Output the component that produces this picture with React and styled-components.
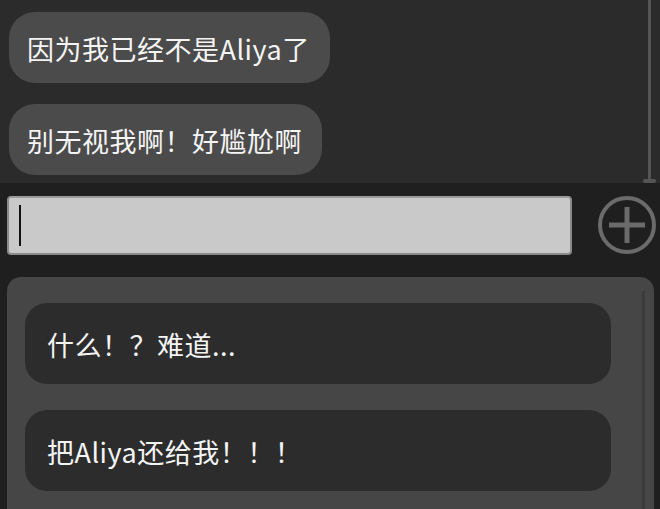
import React from 'react';
import styled, { createGlobalStyle } from 'styled-components';

const GlobalStyle = createGlobalStyle`
  html, body {
    margin: 0;
    padding: 0;
    background: #1f1f1f;
  }
  body {
    font-family: "Noto Sans CJK SC", "Noto Sans", sans-serif;
    color: #f4f4f4;
  }
`;

const Page = styled.div`
  width: 660px;
  height: 509px;
  overflow: hidden;
  display: flex;
  flex-direction: column;
  background: #1f1f1f;
`;

const ChatArea = styled.div`
  position: relative;
  height: 183px;
  flex-shrink: 0;
  background: #2b2b2b;
  padding: 12px 0 0 9px;
  box-sizing: border-box;
  display: flex;
  flex-direction: column;
  align-items: flex-start;
  gap: 21px;
`;

const Bubble = styled.div`
  height: 71px;
  box-sizing: border-box;
  padding: 1px 20px 0 18px;
  display: flex;
  align-items: center;
  background: #4b4b4b;
  border-radius: 26px;
  font-size: 27px;
  letter-spacing: 0.5px;
  line-height: 1;
  white-space: nowrap;
`;

const ScrollTrack = styled.div`
  position: absolute;
  top: 0;
  right: 9px;
  width: 3px;
  height: 180px;
  background: #555;

  &::after {
    content: '';
    position: absolute;
    left: -5px;
    bottom: -3px;
    width: 13px;
    height: 4px;
    border-radius: 2px;
    background: #555;
  }
`;

const InputBar = styled.div`
  height: 94px;
  flex-shrink: 0;
  box-sizing: border-box;
  padding: 13px 0 0 7px;
  display: flex;
  align-items: flex-start;
  gap: 26px;
`;

const TextField = styled.div`
  width: 565px;
  height: 59px;
  box-sizing: border-box;
  background: #c9c9c9;
  border: 2px solid #8a8a8a;
  border-top-color: #9a9a9a;
  border-radius: 4px;
  padding: 7px 0 0 10px;
`;

const Caret = styled.div`
  width: 2px;
  height: 41px;
  background: #111;
`;

const AddButton = styled.button`
  width: 58px;
  height: 58px;
  padding: 0;
  border: none;
  background: transparent;
  display: flex;
  cursor: pointer;
`;

const Panel = styled.div`
  position: relative;
  flex: 1;
  margin: 0 6px 0 7px;
  background: #464646;
  border-radius: 14px 14px 0 0;
  padding: 26px 0 0 18px;
  display: flex;
  flex-direction: column;
  gap: 26px;
`;

const PanelTrack = styled.div`
  position: absolute;
  top: 14px;
  bottom: 0;
  right: 9px;
  width: 3px;
  background: #3b3b3b;
`;

const Option = styled.div`
  width: 586px;
  height: 81px;
  box-sizing: border-box;
  padding: 1px 0 0 22px;
  display: flex;
  align-items: center;
  background: #2c2c2c;
  border-radius: 22px;
  font-size: 27px;
  letter-spacing: 0.5px;
  line-height: 1;
  white-space: nowrap;
`;

const messages = ['因为我已经不是Aliya了', '别无视我啊！好尴尬啊'];
const choices = ['什么！？难道...', '把Aliya还给我！！！'];

const App = () => (
  <>
    <GlobalStyle />
    <Page>
      <ChatArea>
        {messages.map((m) => (
          <Bubble key={m}>{m}</Bubble>
        ))}
        <ScrollTrack />
      </ChatArea>

      <InputBar>
        <TextField>
          <Caret />
        </TextField>
        <AddButton aria-label="add">
          <svg width="58" height="58" viewBox="0 0 58 58">
            <circle cx="29" cy="29" r="27" fill="none" stroke="#6b6b6b" strokeWidth="4" />
            <path d="M29 11 V47 M11 29 H47" stroke="#6b6b6b" strokeWidth="5" />
          </svg>
        </AddButton>
      </InputBar>

      <Panel>
        {choices.map((c) => (
          <Option key={c}>{c}</Option>
        ))}
        <PanelTrack />
      </Panel>
    </Page>
  </>
);

export default App;
